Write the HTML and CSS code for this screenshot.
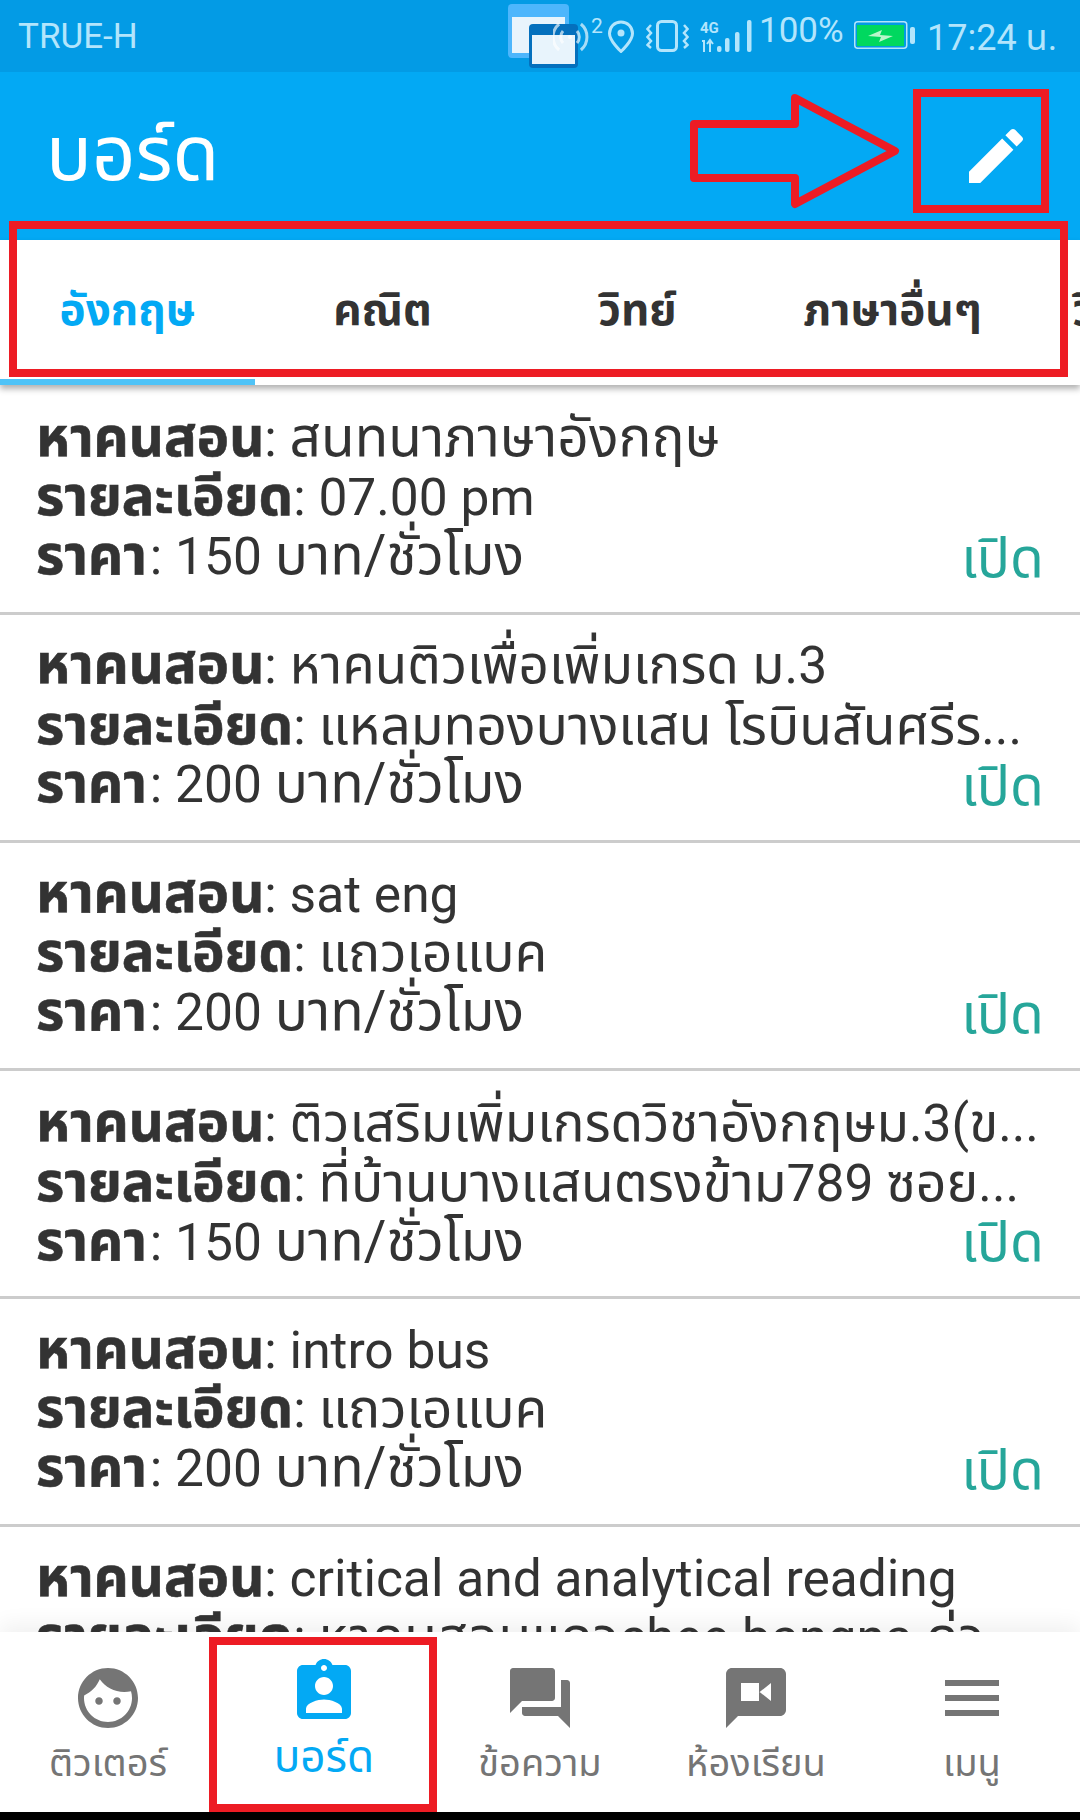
FILE: index.html
```html
<!DOCTYPE html>
<html lang="th">
<head>
<meta charset="utf-8">
<title>บอร์ด</title>
<link rel="stylesheet" href="styles.css">
</head>
<body>
<div class="screen">
  <header class="status">
    <span class="carrier">TRUE-H</span>
    <div class="status-right">
      <svg class="s-cast" viewBox="0 0 37 36"><g fill="none" stroke="#fff" stroke-opacity=".65" stroke-width="3"><path d="M27.9 6A17 17 0 0 1 27.9 32"/><path d="M6.1 6A17 17 0 0 0 6.1 32"/><path d="M24 13A9 9 0 0 1 24 25"/><path d="M10 13A9 9 0 0 0 10 25"/></g><circle cx="17" cy="19" r="2" fill="#fff" fill-opacity=".65"/></svg>
      <span class="s-sup">2</span>
      <svg class="s-pin" viewBox="0 0 26 33"><path d="M13 2C6.5 2 1.5 7 1.5 13.5 1.5 21 13 31.5 13 31.5S24.5 21 24.5 13.5C24.5 7 19.5 2 13 2z" fill="none" stroke="#b3e5fc" stroke-width="3"/><circle cx="13" cy="13" r="3.5" fill="#b3e5fc"/></svg>
      <svg class="s-vib" viewBox="0 0 43 32"><rect x="11.5" y="1.5" width="19" height="29" rx="4" fill="none" stroke="#b3e5fc" stroke-width="3"/><path d="M5 5L1.5 9l3.5 4-3.500 4 3.500 4-3.500 4 3.500 3M38 5l3.500 4-3.500 4 3.500 4-3.500 4 3.500 4-3.500 3" fill="none" stroke="#b3e5fc" stroke-width="2.500"/></svg>
      <svg class="s-signal" viewBox="0 0 52 32"><text x="0" y="13" class="s-4g">4G</text><path d="M2 21h2v11M10 20v12M7 24l3-4 3 4" fill="none" stroke="#b3e5fc" stroke-width="2"/><rect x="17" y="26" width="4.500" height="6" rx="2" fill="#b3e5fc"/><rect x="25" y="18" width="4.500" height="14" rx="2" fill="#b3e5fc"/><rect x="35" y="12" width="4.500" height="20" rx="2" fill="#b3e5fc"/><rect x="47" y="0" width="4.500" height="32" rx="2" fill="#b3e5fc"/></svg>
      <span class="s-pct">100%</span>
      <svg class="s-batt" viewBox="0 0 61 28"><rect x=".75" y=".75" width="52" height="26.500" rx="3" fill="none" stroke="#b3e5fc" stroke-width="1.500"/><rect x="3" y="4" width="47" height="21" fill="#00d85f"/><path d="M14 15L28 9l-2 5 13 1-14 6 2-5z" fill="#b9f6ca"/><rect x="56" y="6" width="5" height="17" rx="2" fill="#b3e5fc"/></svg>
      <span class="s-time">17:24 น.</span>
    </div>
  </header>

  <div class="appbar">
    <h1 class="title">บอร์ด</h1>
    <svg class="edit" viewBox="0 0 24 24"><path d="M3 17.25V21h3.75L17.81 9.94l-3.75-3.75L3 17.25zM20.71 7.04c.39-.39.39-1.02 0-1.41l-2.34-2.34c-.39-.39-1.02-.39-1.41 0l-1.83 1.83 3.75 3.75 1.83-1.83z"/></svg>
  </div>

  <nav class="tabs">
    <div class="tab tab-on">อังกฤษ</div>
    <div class="tab">คณิต</div>
    <div class="tab">วิทย์</div>
    <div class="tab">ภาษาอื่นๆ</div>
    <div class="tab">วิชาอื่นๆ</div>
    <span class="tab-bar"></span>
  </nav>

  <main class="list">
    <article class="row">
      <p class="line line-wide"><b>หาคนสอน</b><span class="en">: </span>สนทนาภาษาอังกฤษ</p>
      <p class="line"><b>รายละเอียด</b><span class="en">: 07.00 pm</span></p>
      <p class="line line-price"><b>ราคา</b><span class="en">: 150 </span>บาท/ชั่วโมง</p>
      <span class="open">เปิด</span>
    </article>
    <article class="row">
      <p class="line line-narrow"><b>หาคนสอน</b><span class="en">: </span>หาคนติวเพื่อเพิ่มเกรด ม<span class="en">.3</span></p>
      <p class="line line-low"><b>รายละเอียด</b><span class="en">: </span>แหลมทองบางแสน โรบินสันศรีร<span class="en">...</span></p>
      <p class="line line-price"><b>ราคา</b><span class="en">: 200 </span>บาท/ชั่วโมง</p>
      <span class="open">เปิด</span>
    </article>
    <article class="row">
      <p class="line"><b>หาคนสอน</b><span class="en">: sat eng</span></p>
      <p class="line"><b>รายละเอียด</b><span class="en">: </span>แถวเอแบค</p>
      <p class="line line-price"><b>ราคา</b><span class="en">: 200 </span>บาท/ชั่วโมง</p>
      <span class="open">เปิด</span>
    </article>
    <article class="row row-low">
      <p class="line line-narrow"><b>หาคนสอน</b><span class="en">: </span>ติวเสริมเพิ่มเกรดวิชาอังกฤษม<span class="en">.3(</span>ข<span class="en">...</span></p>
      <p class="line"><b>รายละเอียด</b><span class="en">: </span>ที่บ้านบางแสนตรงข้าม<span class="en">789 </span>ซอย<span class="en">...</span></p>
      <p class="line line-price"><b>ราคา</b><span class="en">: 150 </span>บาท/ชั่วโมง</p>
      <span class="open">เปิด</span>
    </article>
    <article class="row">
      <p class="line"><b>หาคนสอน</b><span class="en">: intro bus</span></p>
      <p class="line"><b>รายละเอียด</b><span class="en">: </span>แถวเอแบค</p>
      <p class="line line-price"><b>ราคา</b><span class="en">: 200 </span>บาท/ชั่วโมง</p>
      <span class="open">เปิด</span>
    </article>
    <article class="row">
      <p class="line"><b>หาคนสอน</b><span class="en">: critical and analytical reading</span></p>
      <p class="line"><b>รายละเอียด</b><span class="en">: </span>หาคนสอนแถว<span class="en">chee bangna </span>ด่ว</p>
      <p class="line line-price"><b>ราคา</b><span class="en">: 200 </span>บาท/ชั่วโมง</p>
    </article>
  </main>

  <footer class="bottom">
    <div class="item">
      <svg class="ico" viewBox="0 0 24 24"><path d="M9 11.75c-.69 0-1.25.56-1.25 1.25s.56 1.25 1.25 1.25 1.25-.56 1.25-1.25-.56-1.25-1.25-1.25zm6 0c-.69 0-1.25.56-1.25 1.25s.56 1.25 1.25 1.25 1.25-.56 1.25-1.25-.56-1.25-1.25-1.25zM12 2C6.48 2 2 6.48 2 12s4.48 10 10 10 10-4.48 10-10S17.52 2 12 2zm0 18c-4.41 0-8-3.59-8-8 0-.29.02-.58.05-.86 2.36-1.05 4.23-2.98 5.21-5.37C11.07 8.33 14.05 10 17.42 10c.78 0 1.53-.09 2.25-.26.21.71.33 1.47.33 2.26 0 4.41-3.59 8-8 8z"/></svg>
      <span class="label">ติวเตอร์</span>
    </div>
    <div class="item item-on">
      <svg class="ico" viewBox="0 0 24 24"><path d="M19 3h-4.18C14.4 1.84 13.3 1 12 1c-1.3 0-2.4.84-2.82 2H5c-1.1 0-2 .9-2 2v14c0 1.1.9 2 2 2h14c1.1 0 2-.9 2-2V5c0-1.1-.9-2-2-2zm-7 0c.55 0 1 .45 1 1s-.45 1-1 1-1-.45-1-1 .45-1 1-1zm0 4c1.66 0 3 1.34 3 3s-1.34 3-3 3-3-1.34-3-3 1.34-3 3-3zm6 12H6v-1.4c0-2 4-3.1 6-3.1s6 1.1 6 3.1V19z"/></svg>
      <span class="label">บอร์ด</span>
    </div>
    <div class="item">
      <svg class="ico" viewBox="0 0 24 24"><path d="M21 6h-2v9H6v2c0 .55.45 1 1 1h11l4 4V7c0-.55-.45-1-1-1zm-4 6V3c0-.55-.45-1-1-1H3c-.55 0-1 .45-1 1v14l4-4h10c.55 0 1-.45 1-1z"/></svg>
      <span class="label">ข้อความ</span>
    </div>
    <div class="item">
      <svg class="ico" viewBox="0 0 24 24"><path d="M20 2H4c-1.1 0-1.99.9-1.99 2L2 22l4-4h14c1.1 0 2-.9 2-2V4c0-1.1-.9-2-2-2zm-3 11l-4-3.2V13H7V7h6v3.2L17 7v6z"/></svg>
      <span class="label">ห้องเรียน</span>
    </div>
    <div class="item">
      <svg class="ico" viewBox="0 0 24 24"><path d="M3 18h18v-2H3v2zm0-5h18v-2H3v2zm0-7v2h18V6H3z"/></svg>
      <span class="label">เมนู</span>
    </div>
  </footer>

  <div class="win-back"><i></i></div>
  <div class="win-front"><i></i></div>

  <div class="mark mark-edit"></div>
  <div class="mark mark-tabs"></div>
  <div class="mark mark-nav"></div>
  <svg class="mark-arrow" viewBox="0 0 220 124"><path d="M6 34H107V8L207 61 107 114V88H6z" fill="none" stroke="#ed1c24" stroke-width="8" stroke-linejoin="round"/></svg>
</div>
</body>
</html>
```
FILE: styles.css
```css
* { box-sizing: border-box; }
html, body { margin: 0; padding: 0; background: #000; }
body { font-family: Roboto, "Noto Sans Thai", "Noto Sans", "Noto Sans CJK SC", sans-serif; color: #333; }
.screen { position: relative; width: 1080px; height: 1820px; overflow: hidden; background: #fff; display: flex; flex-direction: column; }

.status { flex: none; height: 72px; background: #039be5; color: #b3e5fc; display: flex; align-items: flex-start; justify-content: space-between; padding: 0 27px 0 18px; font-size: 35px; line-height: 40px; }
.carrier { margin-top: 17px; }
.status-right { display: flex; align-items: flex-start; }
.status-right > * { flex: none; }
.s-cast { width: 37px; height: 36px; margin-top: 18px; z-index: 5; }
.s-sup { font-size: 21px; line-height: 24px; width: 11px; margin: 14px 0 0 1px; }
.s-pin { width: 26px; height: 33px; margin: 20px 0 0 6px; }
.s-vib { width: 43px; height: 32px; margin: 20px 0 0 12px; }
.s-signal { width: 52px; height: 32px; margin: 20px 0 0 11px; }
.s-4g { font-size: 15px; font-weight: 700; fill: #b3e5fc; }
.s-pct { font-size: 35px; width: 84px; margin: 11px 0 0 7px; white-space: nowrap; }
.s-batt { width: 61px; height: 28px; margin: 21px 0 0 11px; }
.s-time { font-size: 36px; width: 126px; margin: 18px 0 0 12px; white-space: nowrap; }

.appbar { flex: none; height: 168px; background: #03a9f4; display: flex; align-items: center; justify-content: space-between; padding: 0 48px 0 46px; }
.title { margin: 0; font-size: 76px; font-weight: 400; color: #fff; }
.edit { width: 72px; height: 72px; fill: #fff; }

.tabs { flex: none; position: relative; height: 145px; display: flex; background: #fff; overflow: hidden; box-shadow: 0 4px 6px rgba(0,0,0,.3); z-index: 1; }
.tab { flex: none; width: 255px; display: flex; align-items: center; justify-content: center; font-size: 44px; font-weight: 700; color: #333; padding-bottom: 2px; }
.tab-on { color: #03a9f4; }
.tab-bar { position: absolute; left: 0; bottom: 0; width: 255px; height: 6px; background: #4fc3f7; }

.list { flex: none; padding-top: 2px; }
.row { position: relative; height: 228px; border-bottom: 3px solid #ccc; padding: 21px 36px 0; }
.row-low { padding-top: 23px; }
.line { margin: 0; font-size: 53.5px; line-height: 59px; white-space: nowrap; }
.line-wide, .line-price { font-size: 55px; }
.line-narrow { font-size: 53px; }
.line-price b { margin-right: 3px; }
.line-low { margin: 1px 0 -1px; }
.line b { font-weight: 700; font-size: 54.5px; line-height: 0; -webkit-text-stroke: .6px #333; }
.en { font-size: 51.5px; line-height: 0; }
.open { position: absolute; right: 36px; bottom: 24px; font-size: 55px; line-height: 59px; color: #26a69a; }

.bottom { position: absolute; left: 0; right: 0; top: 1632px; height: 180px; background: #fff; display: flex; box-shadow: 0 -8px 20px rgba(0,0,0,.06); z-index: 2; }
.bottom::after { content: ""; position: absolute; left: 0; right: 0; top: 180px; height: 8px; background: #000; }
.item { flex: 1; display: flex; flex-direction: column; align-items: center; padding-top: 30px; color: #757575; fill: #757575; }
.item-on { padding-top: 24px; color: #03a9f4; fill: #03a9f4; }
.ico { width: 72px; height: 72px; flex: none; }
.label { font-size: 38px; line-height: 54px; margin-top: 2px; }
.item-on .label { font-size: 44px; }

.win-back { position: absolute; left: 508px; top: 4px; width: 61px; height: 54px; background: #4db6fc; border-radius: 4px; padding: 13px 4px 5px; z-index: 3; }
.win-back i { display: block; height: 100%; background: #e8f4fc; }
.win-front { position: absolute; left: 529px; top: 24px; width: 49px; height: 44px; background: #0470bd; border-radius: 4px; padding: 11px 3px 4px; z-index: 3; }
.win-front i { display: block; height: 100%; background: #e8f4fc; }

.mark { position: absolute; border: 8px solid #ed1c24; z-index: 4; }
.mark-edit { left: 913px; top: 89px; width: 136px; height: 124px; }
.mark-tabs { left: 9px; top: 221px; width: 1059px; height: 156px; }
.mark-nav { left: 209px; top: 1637px; width: 228px; height: 175px; }
.mark-arrow { position: absolute; left: 688px; top: 90px; width: 220px; height: 124px; z-index: 4; }
```
